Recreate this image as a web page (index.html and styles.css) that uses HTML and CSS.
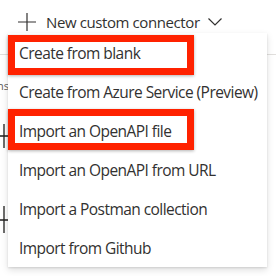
FILE: index.html
```html
<!DOCTYPE html>
<html lang="en">
<head>
    <meta charset="UTF-8">
    <meta name="viewport" content="width=device-width, initial-scale=1.0">
    <title>New custom connector</title>
    <link rel="stylesheet" href="styles.css">
</head>
<body>

    <div class="page">
        <div class="toolbar">
            <svg class="plus" width="18" height="18" viewBox="0 0 18 18">
                <path d="M9 0V18M0 9H18" stroke="#323130" stroke-width="1.2" fill="none"/>
            </svg>
            <span class="toolbar-label">New custom connector</span>
            <svg class="chevron" width="14" height="8" viewBox="0 0 14 8">
                <path d="M0.5 0.5L7 7L13.5 0.5" stroke="#323130" stroke-width="1.2" fill="none"/>
            </svg>
        </div>

        <!-- page content behind the menu, only its left edge shows -->
        <div class="side">
            <div class="side-label"><span>Connections</span></div>
            <svg class="side-plus first" width="20" height="24" viewBox="0 0 20 24">
                <path d="M10 0V24M0 12H20" stroke="#201f1e" stroke-width="1.3" fill="none"/>
            </svg>
            <svg class="side-plus" width="20" height="27" viewBox="0 0 20 27">
                <path d="M10 0V27M0 14H20" stroke="#201f1e" stroke-width="1.3" fill="none"/>
            </svg>
        </div>

        <div class="menu">
            <div class="menu-item marked">Create from blank</div>
            <div class="menu-item">Create from Azure Service (Preview)</div>
            <div class="menu-item marked raised">Import an OpenAPI file</div>
            <div class="menu-item">Import an OpenAPI from URL</div>
            <div class="menu-item">Import a Postman collection</div>
            <div class="menu-item">Import from Github</div>
        </div>
    </div>

</body>
</html>
```

FILE: styles.css
```css
body { margin: 0; background: #fff; font-family: "Open Sans", "Noto Sans", sans-serif; color: #323130; }
.page { position: relative; width: 276px; height: 276px; overflow: hidden; }

.toolbar {
    display: flex; align-items: center;
    height: 55px; padding-left: 18px; padding-bottom: 11px;
    border-bottom: 1px solid #e1dfdd;
    box-sizing: border-box;
}
.toolbar-label { margin-left: 10px; font-size: 15px; letter-spacing: -0.4px; }
.chevron { margin-left: 8px; }

.side { width: 9px; overflow: hidden; display: flex; flex-direction: column; }
.side-label { display: flex; justify-content: flex-end; font-size: 11px; color: #605e5c; margin-top: 24px; height: 14px; line-height: 14px; }
.side-plus { margin-left: -6px; flex-shrink: 0; }
.side-plus.first { margin-top: 31px; margin-bottom: 58px; }

.menu {
    position: absolute; left: 8px; top: 33px; width: 259px;
    background: #fff;
    box-shadow: 0 3px 7px rgba(0, 0, 0, 0.13), 0 0.6px 1.8px rgba(0, 0, 0, 0.11);
}
.menu-item {
    position: relative;
    height: 39px; line-height: 40px;
    padding-left: 11px;
    font-size: 15.5px; letter-spacing: -0.55px;
    white-space: nowrap;
}
.menu-item.marked::after {
    content: ""; position: absolute;
    left: 0; top: 2px; width: 186px; height: 40px;
    border: 7px solid #ff2200; box-sizing: border-box;
    box-shadow: 0 1px 3px rgba(0, 0, 0, 0.3);
}
.menu-item.raised::after { top: -2px; height: 41px; }
```
